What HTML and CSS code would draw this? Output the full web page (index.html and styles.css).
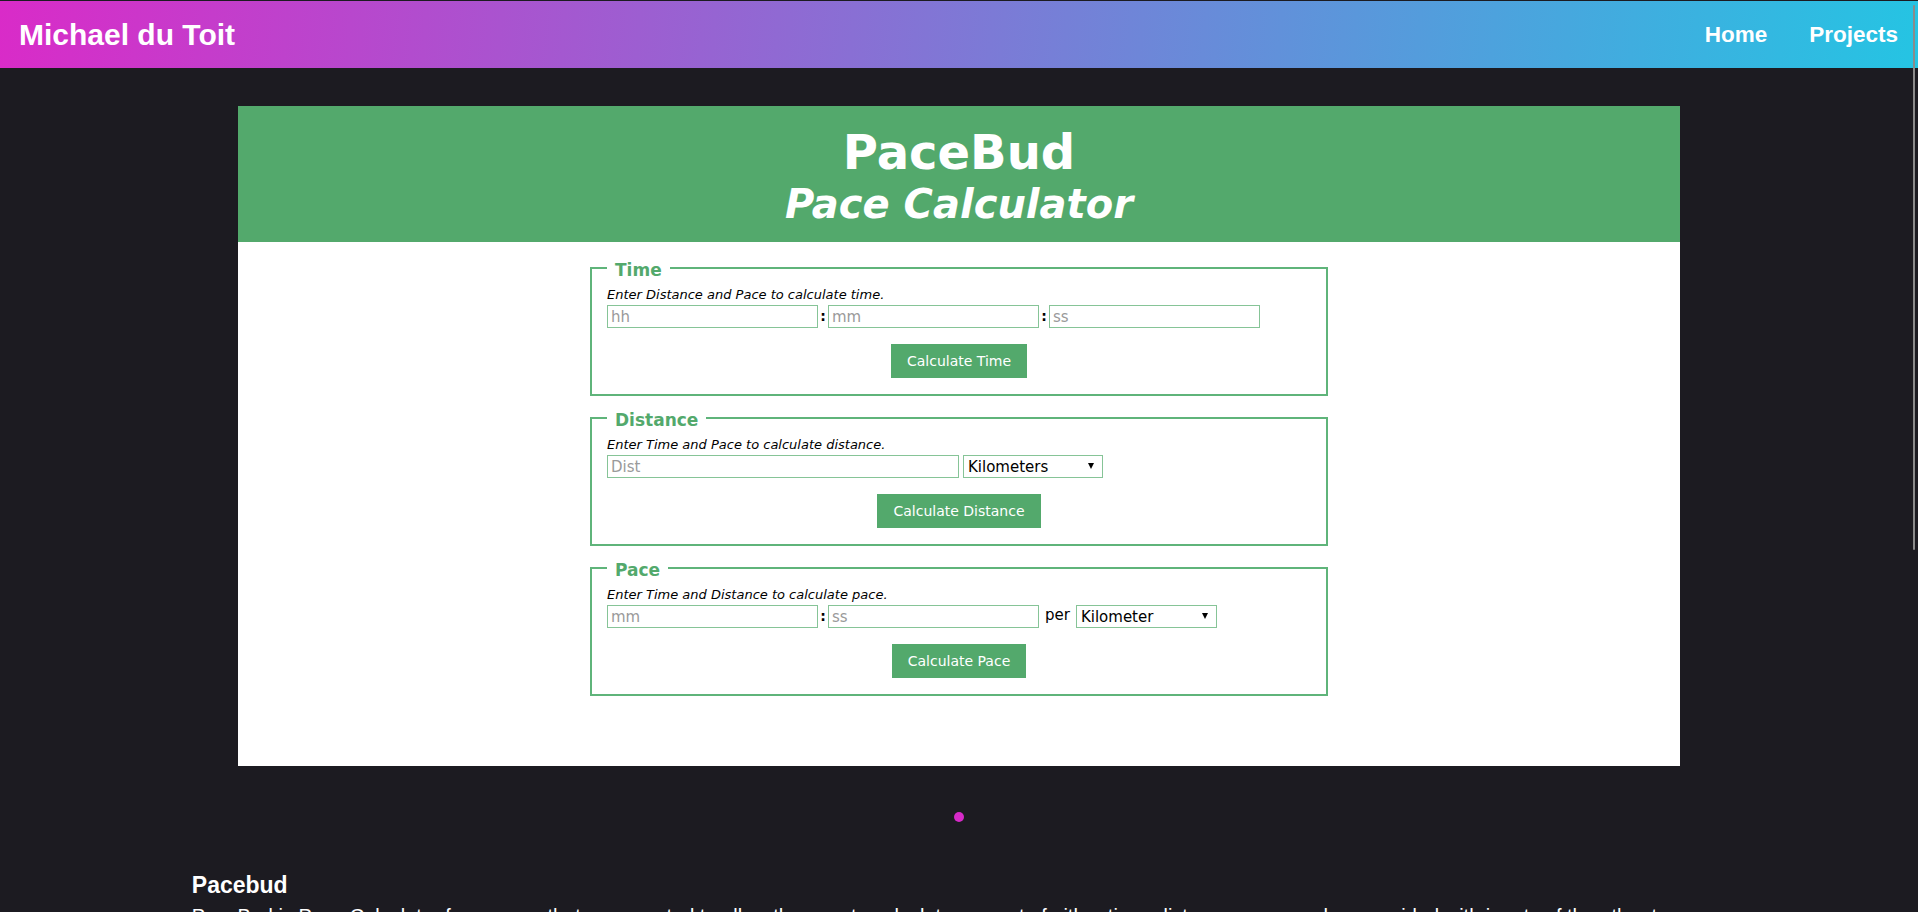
FILE: index.html
```html
<!DOCTYPE html>
<html lang="en">
<head>
<meta charset="utf-8">
<title>Michael du Toit – Projects</title>
<link rel="stylesheet" href="styles.css">
</head>
<body>
<nav class="topbar">
  <a class="brand" href="#">Michael du Toit</a>
  <ul class="nav-links">
    <li><a href="#">Home</a></li>
    <li><a href="#">Projects</a></li>
  </ul>
</nav>
<main class="page">
  <section class="showcase">
    <div class="app">
      <header class="app-head">
        <h1 class="app-title">PaceBud</h1>
        <h2 class="app-subtitle">Pace Calculator</h2>
      </header>
      <div class="app-body">
        <fieldset class="calc">
          <legend>Time</legend>
          <p class="hint">Enter Distance and Pace to calculate time.</p>
          <div class="row">
            <input class="field w211" placeholder="hh">
            <span class="colon">:</span>
            <input class="field w211" placeholder="mm">
            <span class="colon">:</span>
            <input class="field w211" placeholder="ss">
          </div>
          <div class="actions"><button class="btn">Calculate Time</button></div>
        </fieldset>
        <fieldset class="calc">
          <legend>Distance</legend>
          <p class="hint">Enter Time and Pace to calculate distance.</p>
          <div class="row">
            <input class="field w352" placeholder="Dist">
            <span class="select-wrap sel-dist">
              <select class="select"><option>Kilometers</option><option>Miles</option></select>
            </span>
          </div>
          <div class="actions"><button class="btn">Calculate Distance</button></div>
        </fieldset>
        <fieldset class="calc">
          <legend>Pace</legend>
          <p class="hint">Enter Time and Distance to calculate pace.</p>
          <div class="row">
            <input class="field w211" placeholder="mm">
            <span class="colon">:</span>
            <input class="field w211" placeholder="ss">
            <span class="per">per</span>
            <span class="select-wrap sel-pace">
              <select class="select"><option>Kilometer</option><option>Mile</option></select>
            </span>
          </div>
          <div class="actions"><button class="btn">Calculate Pace</button></div>
        </fieldset>
      </div>
    </div>
  </section>
  <div class="carousel-dots"><span class="dot"></span></div>
  <article class="about">
    <h3 class="about-title">Pacebud</h3>
    <p class="about-text">PaceBud is Pace Calculator for runners that was created to allow the user to calculate one out of either time, distance or pace when provided with inputs of the other two fields. For example, entering a time and a distance will give you the pace needed to achieve it.</p>
  </article>
</main>
<div class="scroll-thumb"></div>
</body>
</html>
```
FILE: styles.css
```css
* { box-sizing: border-box; }
html { scrollbar-width: none; }
html::-webkit-scrollbar { display: none; }

body {
  margin: 0;
  padding-top: 1px;
  background: #1c1b21;
  color: #fff;
  font-family: "Liberation Sans", Arial, sans-serif;
}

.topbar {
  height: 67px;
  display: flex;
  align-items: center;
  justify-content: space-between;
  padding: 0 20px 0 19px;
  background: linear-gradient(95deg, #d92bc8 0%, #25c4e3 100%);
}
.brand {
  font-size: 30px;
  line-height: 34px;
  font-weight: 700;
  color: #fff;
  text-decoration: none;
}
.nav-links {
  display: flex;
  gap: 42px;
  list-style: none;
  margin: 0;
  padding: 1px 0 0;
}
.nav-links a {
  font-size: 22.5px;
  line-height: 26px;
  font-weight: 700;
  color: #fff;
  text-decoration: none;
}

.page { padding-top: 38px; }

.app {
  width: 1442px;
  margin: 0 auto;
  background: #fff;
  color: #000;
  font-family: "DejaVu Sans", Verdana, sans-serif;
}
.app-head {
  background: #53a96c;
  color: #fff;
  text-align: center;
  padding: 22px 0 16px;
}
.app-title {
  margin: 0;
  font-size: 48px;
  line-height: 48px;
  font-weight: 700;
}
.app-subtitle {
  margin: 6px 0 0;
  font-size: 40px;
  line-height: 44px;
  font-weight: 700;
  font-style: italic;
}
.app-body {
  padding: 16px 0 70px;
  display: flex;
  flex-direction: column;
  align-items: center;
  gap: 12px;
}

.calc {
  width: 738px;
  min-width: 0;
  margin: 0;
  border: 2px solid #5fb47a;
  padding: 9px 15px 16px;
}
.calc legend {
  padding: 4px 8px 0;
  font-size: 17px;
  line-height: 16px;
  font-weight: 700;
  color: #53a96c;
}
.hint {
  margin: 0;
  font-size: 13px;
  line-height: 16px;
  font-style: italic;
}
.row {
  display: flex;
  align-items: flex-start;
  height: 23px;
  margin-top: 2px;
}
.field {
  height: 23px;
  border: 1px solid #86c497;
  border-radius: 0;
  padding: 0 3px;
  font: 15px "DejaVu Sans", Verdana, sans-serif;
  color: #000;
  background: #fff;
  outline: none;
}
.field::placeholder { color: #9a9a9a; }
.w211 { width: 211px; }
.w352 { width: 352px; }
.colon {
  width: 10px;
  text-align: center;
  font-size: 14px;
  line-height: 23px;
  font-weight: 700;
}
.per {
  margin: 0 6px;
  font-size: 15px;
  line-height: 20px;
}
.select-wrap {
  position: relative;
  height: 23px;
}
.sel-dist { width: 140px; margin-left: 4px; }
.sel-pace { width: 141px; }
.select-wrap::after {
  content: "";
  position: absolute;
  right: 9px;
  top: 8px;
  border-left: 3.5px solid transparent;
  border-right: 3.5px solid transparent;
  border-top: 6px solid #000;
  pointer-events: none;
}
.select {
  appearance: none;
  -webkit-appearance: none;
  width: 100%;
  height: 23px;
  border: 1px solid #86c497;
  border-radius: 0;
  padding: 0 4px;
  font: 15px "DejaVu Sans", Verdana, sans-serif;
  color: #000;
  background: #fff;
  outline: none;
}
.actions {
  display: flex;
  justify-content: center;
  margin-top: 16px;
}
.btn {
  height: 34px;
  padding: 0 16px;
  border: none;
  border-radius: 0;
  background: #53a96c;
  color: #fff;
  font: 14px "DejaVu Sans", Verdana, sans-serif;
}

.carousel-dots {
  display: flex;
  justify-content: center;
  margin-top: 46px;
}
.dot {
  width: 10px;
  height: 10px;
  border-radius: 50%;
  background: #d62ac8;
}

.about {
  width: 80%;
  margin: 51px auto 0;
}
.about-title {
  margin: 0;
  font-size: 23px;
  line-height: 25px;
  font-weight: 700;
}
.about-text {
  margin: 4px 0 0;
  font-size: 20px;
  line-height: 28px;
}

.scroll-thumb {
  position: fixed;
  top: 5px;
  right: 3px;
  width: 2px;
  height: 545px;
  border-radius: 1px;
  background: #8b8b8b;
}
```
